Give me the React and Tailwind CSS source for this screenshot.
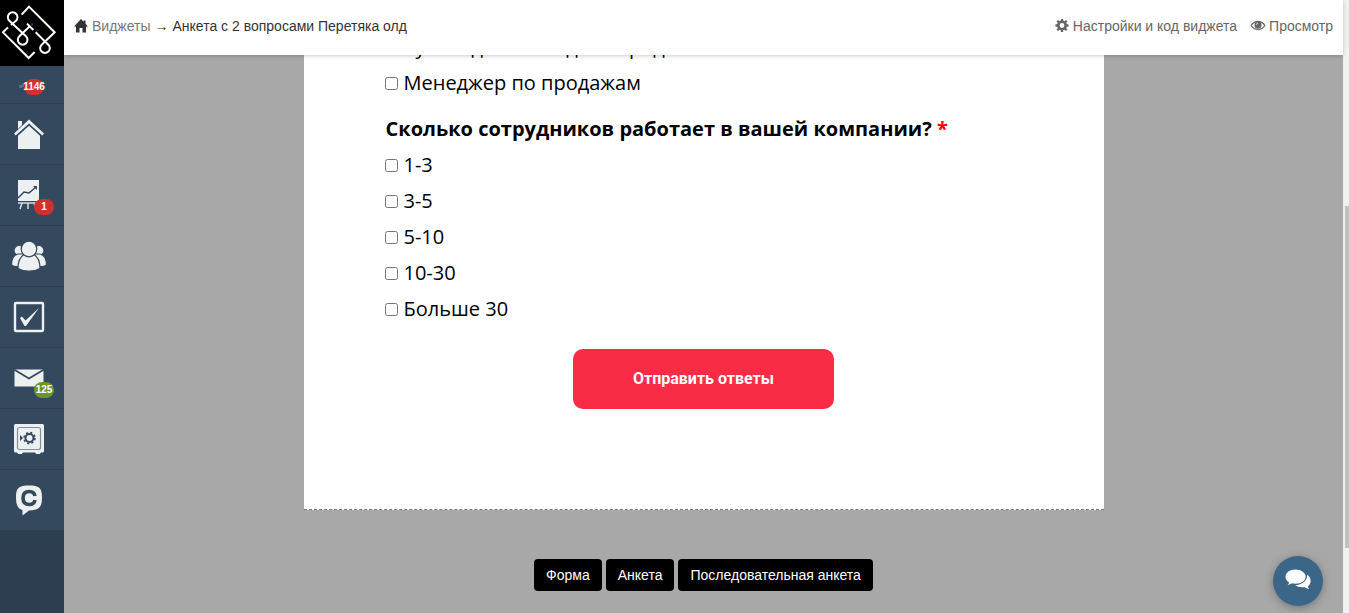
import { useState } from "react";

const COMPANY_SIZES = ["1-3", "3-5", "5-10", "10-30", "Больше 30"];

const TEMPLATES = ["Форма", "Анкета", "Последовательная анкета"];

const LogoMark = () => (
  <svg viewBox="0 0 192 198" className="h-[66px] w-16" fill="none" stroke="#fff" strokeWidth="6">
    <path d="M65 44 87 20 164 97 125 134A14.500 14.500 0 1 0 145 134L107 97" />
    <path d="M24 82 9 97 86 174 104 156" />
    <path d="M33 75 48 62A14.500 14.500 0 1 0 28 62L78 109A14.500 14.500 0 1 1 58 109L90 78" />
    <path d="M81 71 100 90" />
    <path d="M94 73h5" stroke="#3b3f9e" />
  </svg>
);

const HouseIcon = () => (
  <svg viewBox="0 0 32 32" className="h-8 w-8" fill="#ecf0f1">
    <path d="M5 3h4v4l-4 4z" />
    <path d="M16 1.500 1 15.500l1.700 2L16 5.500l13.300 12 1.700-2z" />
    <path d="M16 7.700 5 17.700V31h22V17.700z" />
  </svg>
);

const ChartIcon = () => (
  <svg viewBox="0 0 32 32" className="h-8 w-8" fill="none">
    <path d="M5 1h21v21H5z" fill="#ecf0f1" />
    <path d="M5 19l6-6 5 1 7-6" stroke="#34495e" strokeWidth="1.500" />
    <path d="M20 7h4v4" fill="#34495e" />
    <path d="M5 24h22M9 24 7 30M15 24v6M21 24l2 6" stroke="#d5dbdf" strokeWidth="1.500" />
  </svg>
);

const PeopleIcon = () => (
  <svg viewBox="2 0 32 32" className="h-8 w-8 overflow-visible" fill="#ecf0f1" stroke="#34495e" strokeWidth="1.200">
    <circle cx="8" cy="10.500" r="5" />
    <circle cx="28" cy="10.500" r="5" />
    <path d="M7 14C3 15 .500 19 .500 25c2 1.500 5 2 8 1.500L13 14zM29 14c4 1 6.500 5 6.500 11-2 1.500-5 2-8 1.500L23 14z" />
    <path d="M13 14.500C9 17 7 22 7 28.500c6 3.500 16 3.500 22 0 0-6.500-2-11.500-6-14z" />
    <circle cx="18" cy="9" r="7.800" />
  </svg>
);

const TaskIcon = () => (
  <svg viewBox="0 0 32 32" className="h-8 w-8">
    <rect x="2" y="2" width="28" height="28" rx="1" fill="none" stroke="#ecf0f1" strokeWidth="2.400" />
    <path d="M7 17l2-1.500 3.500 4L26 7 13 25h-1.500z" fill="#ecf0f1" />
  </svg>
);

const MailIcon = () => (
  <svg viewBox="0 0 32 32" className="h-8 w-8">
    <path d="M1.500 7.500h29v17h-29z" fill="#ecf0f1" />
    <path d="M1 7.500l15 9 15-9" fill="none" stroke="#34495e" strokeWidth="1.800" />
  </svg>
);

const SafeIcon = () => (
  <svg viewBox="0 0 32 32" className="h-8 w-8" fill="none">
    <rect x="1" y="1" width="30" height="28.500" rx="1.500" fill="#ecf0f1" />
    <path d="M4 29h6l-1 2H5zM22 29h6l-1 2h-4z" fill="#ecf0f1" />
    <rect x="4.500" y="4.500" width="23" height="22" rx="2" stroke="#7f8f9b" strokeWidth="1.200" />
    <circle cx="16.500" cy="15" r="4" stroke="#34495e" strokeWidth="2" />
    <circle cx="16.500" cy="15" r="5.500" stroke="#34495e" strokeWidth="1.600" strokeDasharray="2.160 2.160" />
    <path d="M7 12l3 3-3 3z" fill="#34495e" />
  </svg>
);

const ChatLetterIcon = () => (
  <svg viewBox="0 0 32 32" className="h-8 w-8">
    <path
      d="M3 13C3 3.500 6 1.500 16 1.500S29 3.500 29 13.500s-3 12.500-13 13L9.500 31.500v-5.500C4.500 24.500 3 20.500 3 13z"
      fill="#ecf0f1"
    />
    <path d="M22 12c-.500-3-2.500-4.500-5.700-4.500-4 0-6.300 2.300-6.300 6.500s2.300 6.500 6.300 6.500c3.200 0 5.200-1.500 5.700-4.500" fill="none" stroke="#34495e" strokeWidth="3.600" />
  </svg>
);

const HomeGlyph = () => (
  <svg viewBox="0 0 14 14" className="h-3.5 w-3.5" fill="currentColor">
    <path d="M7 0 0 7.500h2V13.500h3.500V9h3v4.500H12V7.500h2L11.500 4.800V1.500h-2v1.200z" />
  </svg>
);

const GearGlyph = () => (
  <svg viewBox="0 0 14 14" className="h-3.5 w-3.5" fill="none" stroke="currentColor">
    <circle cx="7" cy="6.500" r="3.700" strokeWidth="2.600" />
    <path d="M7 0v3M7 10v3M.500 6.500h3M10.500 6.500h3M2.300 1.800l2 2M9.700 9.200l2 2M11.700 1.800l-2 2M4.300 9.200l-2 2" strokeWidth="2.300" />
  </svg>
);

const EyeGlyph = () => (
  <svg viewBox="0 0 15 14" className="h-3.5 w-3.5 overflow-visible">
    <path d="M.200 6.500C3.500.500 11.500.500 14.800 6.500 11.500 12 3.500 12 .200 6.500z" fill="none" stroke="currentColor" strokeWidth="1.400" />
    <circle cx="7.500" cy="5.800" r="3.800" fill="currentColor" />
    <path d="M5.700 5.800c0-1.200.700-1.900 1.900-1.900" fill="none" stroke="#fff" strokeWidth="1" />
  </svg>
);

const BubblesGlyph = () => (
  <svg viewBox="0 0 26 21" className="h-[21px] w-[26px]" fill="currentColor">
    <path d="M10.500.500C4.800.500.500 3.700.500 7.800c0 2.300 1.400 4.300 3.600 5.600-.300 1-.900 1.800-1.600 2.600 1.800-.200 3.300-.800 4.700-1.700 1 .300 2.200.400 3.300.400 5.700 0 10.200-3.100 10.200-7S16.200.500 10.500.500z" />
    <path d="M22.200 5.500c.800 5.500-4.700 10.500-12 10.700 1.700 1.300 4.200 2 6.800 2 .900 0 1.700-.100 2.500-.300 1.300 1 3 1.700 4.800 1.900-.700-.800-1.300-1.600-1.500-2.600 3.800-2.400 4.100-8.200-.600-11.700z" />
  </svg>
);

const NAV_ITEMS = [
  { title: "Главная", Icon: HouseIcon },
  { title: "Статистика", Icon: ChartIcon, badge: "1", badgeColor: "bg-[#d0312d]" },
  { title: "Клиенты", Icon: PeopleIcon },
  { title: "Задачи", Icon: TaskIcon },
  { title: "Почта", Icon: MailIcon, badge: "125", badgeColor: "bg-[#6b952b]" },
  { title: "Финансы", Icon: SafeIcon },
  { title: "Чат", Icon: ChatLetterIcon },
];

const Sidebar = () => (
  <nav className="w-16 shrink-0 bg-[#2c3e50]">
    <a href="#" aria-label="Логотип" className="block bg-black">
      <LogoMark />
    </a>
    <a href="#notifications" className="flex h-[38px] items-center border-b border-[#2c3e50] bg-[#34495e] pt-1 pl-[18px]">
      <svg viewBox="0 0 6 10" className="h-2.5 w-1.5" fill="#56708a">
        <path d="M1 3h3v3H1zM4 2l2-1v4H4z" />
      </svg>
      <span className="flex h-4 w-5 items-center justify-center rounded-full bg-[#d0312d] text-[10px] font-bold text-white">
        1146
      </span>
    </a>
    {NAV_ITEMS.map(({ title, Icon, badge, badgeColor }) => (
      <a
        key={title}
        href="#"
        aria-label={title}
        className="relative flex h-[61px] items-center border-b border-[#2c3e50] bg-[#34495e] pl-[13px]"
      >
        <Icon />
        {badge && (
          <span
            className={`absolute right-2.5 bottom-2.5 w-5 rounded-full text-center text-[10px] leading-4 font-bold text-white ${badgeColor}`}
          >
            {badge}
          </span>
        )}
      </a>
    ))}
  </nav>
);

const Header = () => (
  <header className="z-10 flex h-[55px] shrink-0 items-center justify-between bg-white px-2.5 pb-1 text-sm text-[#333] shadow-[0_1px_4px_rgba(0,0,0,0.2)]">
    <div className="flex items-center gap-1">
      <HomeGlyph />
      <a href="#widgets" className="text-[#777]">
        Виджеты
      </a>
      <span>→</span>
      <span>Анкета с 2 вопросами Перетяка олд</span>
    </div>
    <div className="flex items-center gap-3.5 text-[#666]">
      <a href="#settings" className="flex items-center gap-1">
        <GearGlyph />
        Настройки и код виджета
      </a>
      <a href="#preview" className="flex items-center gap-1">
        <EyeGlyph />
        Просмотр
      </a>
    </div>
  </header>
);

const Option = ({ label }) => (
  <label className="flex h-9 items-center gap-1.5">
    <input type="checkbox" className="h-[13px] w-[13px]" />
    {label}
  </label>
);

const Survey = () => (
  <form
    onSubmit={(e) => e.preventDefault()}
    className="w-full max-w-[800px] shrink-0 border-b border-dashed border-[#777] bg-white px-[81px] pb-[100px] font-['Open_Sans',sans-serif] text-xl text-black"
  >
    <Option label="Руководитель отдела продаж" />
    <Option label="Менеджер по продажам" />
    <fieldset>
      <legend className="pt-2.5 pl-px leading-9 font-bold">
        Сколько сотрудников работает в вашей компании? <span className="text-[#f00]">*</span>
      </legend>
      {COMPANY_SIZES.map((size) => (
        <Option key={size} label={size} />
      ))}
    </fieldset>
    <button
      type="submit"
      className="mx-auto mt-[22px] block h-[60px] rounded-[10px] bg-[#fa2b45] px-[60px] font-[Roboto,sans-serif] text-base font-bold text-white"
    >
      Отправить ответы
    </button>
  </form>
);

const App = () => {
  const [template, setTemplate] = useState(TEMPLATES[1]);

  return (
    <div className="flex h-screen overflow-hidden font-['Liberation_Sans',Arial,sans-serif]">
      <Sidebar />
      <div className="flex min-w-0 flex-1 flex-col">
        <Header />
        {/* Scrolled to the end of the widget */}
        <main className="flex min-h-0 flex-1 flex-col items-center justify-end overflow-hidden bg-[#a8a8a8] pb-[22px]">
          <Survey />
          <div className="mt-[49px] flex shrink-0 gap-1">
            {TEMPLATES.map((name) => (
              <button
                key={name}
                type="button"
                aria-pressed={template === name}
                onClick={() => setTemplate(name)}
                className="h-8 rounded bg-black px-3 text-sm text-white"
              >
                {name}
              </button>
            ))}
          </div>
        </main>
      </div>
      {/* Scrollbar */}
      <div className="flex w-1.5 shrink-0 flex-col bg-[#f1f1f1] pl-0.5">
        <div className="grow-[206]" />
        <div className="grow-[342] bg-[#c1c1c1]" />
        <div className="grow-[65]" />
      </div>
      <button
        type="button"
        aria-label="Открыть чат"
        className="fixed right-[26px] bottom-[7px] flex h-[50px] w-[50px] items-center justify-center rounded-full bg-[#3b6688] pb-1 text-white shadow-[0_2px_10px_rgba(0,0,0,0.3)]"
      >
        <BubblesGlyph />
      </button>
    </div>
  );
};

export default App;
